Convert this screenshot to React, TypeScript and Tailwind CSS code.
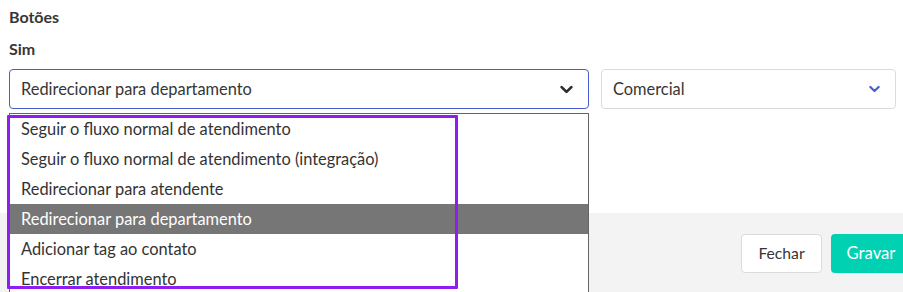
import React from 'react';

const options = [
  'Seguir o fluxo normal de atendimento',
  'Seguir o fluxo normal de atendimento (integração)',
  'Redirecionar para atendente',
  'Redirecionar para departamento',
  'Adicionar tag ao contato',
  'Encerrar atendimento',
];

const Chevron: React.FC<{ className?: string }> = ({ className }) => (
  <svg viewBox="0 0 12 8" className={className} fill="none" stroke="currentColor" strokeWidth="2.4" strokeLinecap="round" strokeLinejoin="round">
    <path d="M1.5 1.8 6 6.2l4.5-4.4" />
  </svg>
);

export default function App() {
  return (
    <div className="relative w-[903px] h-[292px] overflow-hidden bg-white text-[#363636] font-['Lato','Noto_Sans',sans-serif]">
      <div className="px-[9px]">
        <div className="h-[34px] flex items-center text-[16px] font-bold">Botões</div>
        <div className="h-[30px] flex items-center text-[16px] font-bold">Sim</div>
        <div className="mt-[5px] flex gap-[12px]">
          <div className="w-[580px] h-[40px] shrink-0 flex items-center justify-between pl-[11px] pr-[15px] rounded-[4px] border border-[#485fc7] text-[16.4px]">
            <span>Redirecionar para departamento</span>
            <Chevron className="w-[13px] h-[9px] text-[#2b2b2b]" />
          </div>
          <div className="w-[295px] h-[40px] shrink-0 flex items-center justify-between pl-[11px] pr-[15px] rounded-[4px] border border-[#dbdbdb] text-[16.4px]">
            <span>Comercial</span>
            <Chevron className="w-[11px] h-[8px] text-[#485fc7]" />
          </div>
        </div>
      </div>

      <div className="mt-[104px] h-[80px] bg-[#f3f3f3] flex gap-[9px] pl-[741px] pt-[21px]">
        <button className="h-[39px] w-[81px] shrink-0 rounded-[4px] border border-[#dbdbdb] bg-white text-[15.7px] text-[#363636]">Fechar</button>
        <button className="h-[39px] w-[80px] shrink-0 rounded-[4px] bg-[#00d1b2] text-[16.7px] text-white">Gravar</button>
      </div>

      <div className="absolute left-[9px] top-[113px] w-[580px] h-[190px] border border-[#646464] bg-white">
        {options.map((o, i) => (
          <div
            key={o}
            className={
              i === 3
                ? 'h-[30px] flex items-center pl-[11px] text-[16.4px] bg-[#767676] text-white'
                : 'h-[30px] flex items-center pl-[11px] text-[16.4px] text-[#333]'
            }
          >
            {o}
          </div>
        ))}
      </div>

      <div className="absolute left-[7px] top-[115px] w-[451px] h-[174px] border-[3px] border-[#8f1cf0] rounded-[1px] pointer-events-none" />
    </div>
  );
}
